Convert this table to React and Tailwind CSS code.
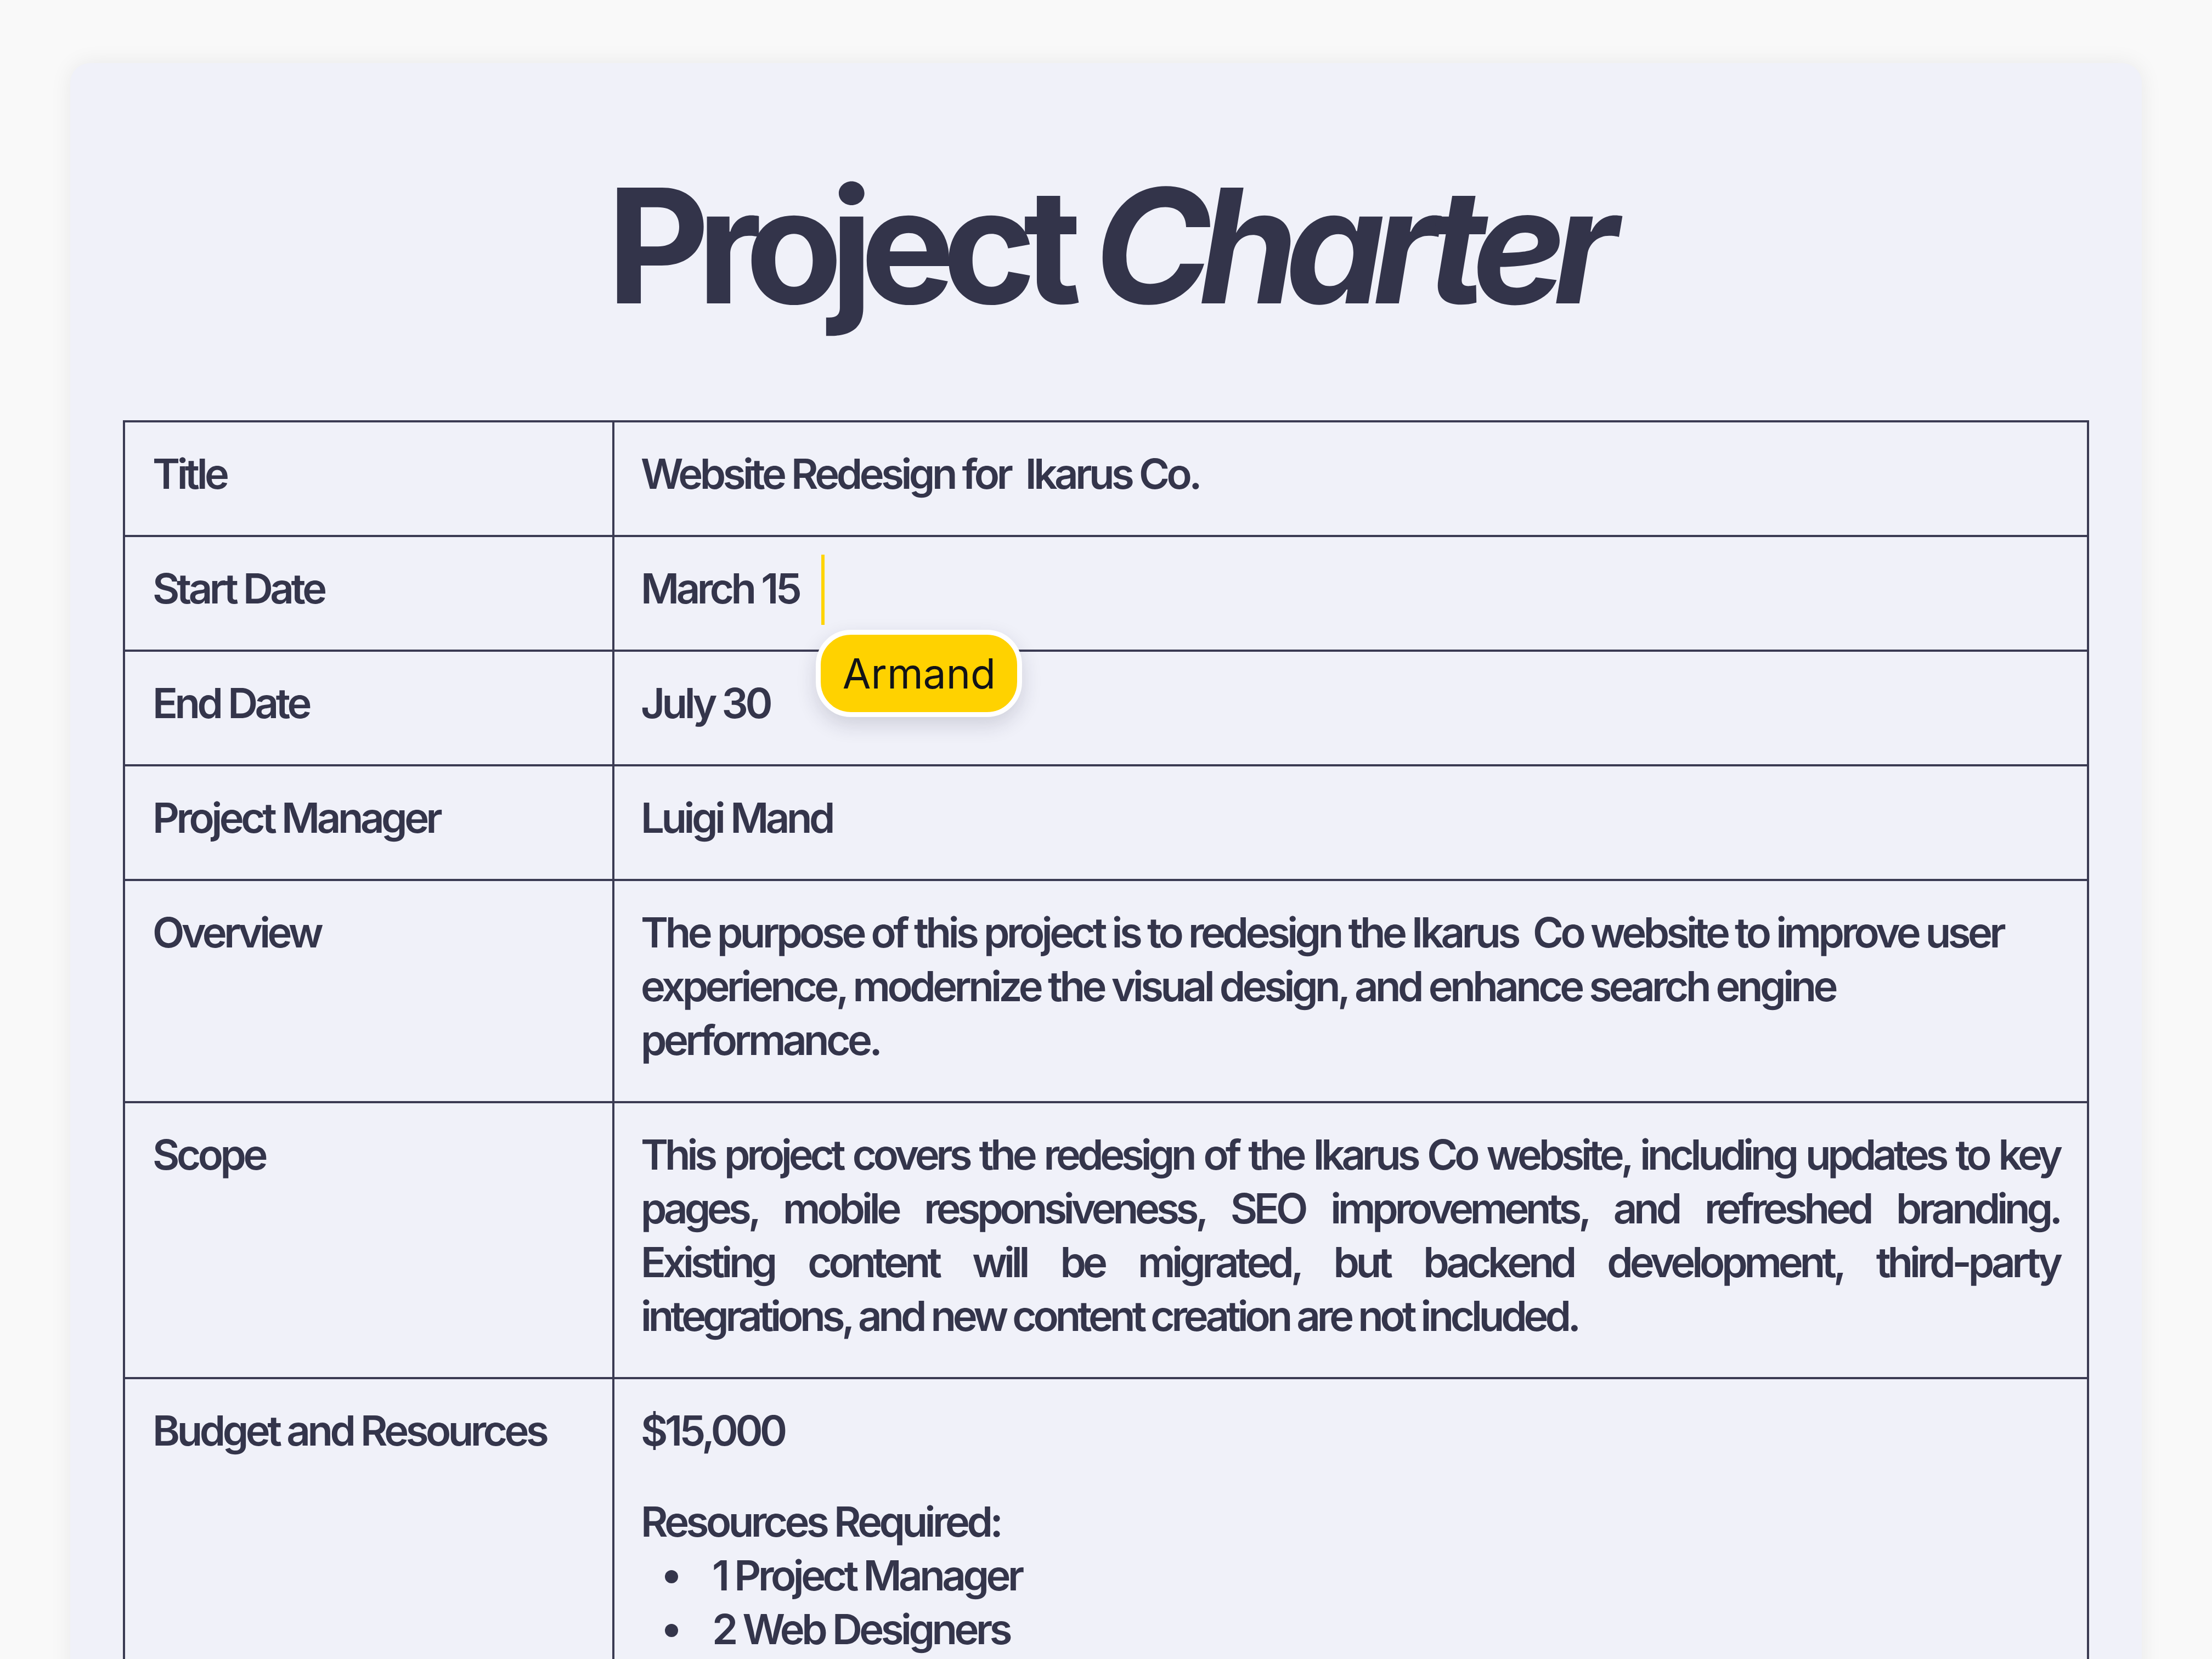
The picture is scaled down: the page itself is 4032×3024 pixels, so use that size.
import React from "react"

const font = { fontFamily: "Inter, 'Noto Sans', sans-serif" }

const rows = [
  { label: "Title", value: "Website Redesign for\u00a0 Ikarus Co." },
  { label: "Start Date", value: "cursor" },
  { label: "End Date", value: "July 30" },
  { label: "Project Manager", value: "Luigi Mand" },
  {
    label: "Overview",
    value:
      "The purpose of this project is to redesign the Ikarus\u00a0 Co website to improve user experience, modernize the visual design, and enhance search engine performance.",
  },
  {
    label: "Scope",
    justify: true,
    value:
      "This project covers the redesign of the Ikarus Co website, including updates to key pages, mobile responsiveness, SEO improvements, and refreshed branding. Existing content will be migrated, but backend development, third-party integrations, and new content creation are not included.",
  },
  { label: "Budget and Resources", value: "budget" },
]

function CursorValue() {
  return (
    <span className="relative inline-block">
      March 15
      {/* collaborator caret + name tag */}
      <span className="absolute left-[calc(100%+41px)] top-[-12px] h-[128px] w-[6px] bg-[#ffd400]" />
      <span
        className="absolute left-[calc(100%+31px)] top-[125px] z-10 flex h-[159px] w-[376px] items-center justify-center rounded-[64px] border-[9px] border-white bg-[#ffd200] text-[75px] font-normal tracking-normal text-[#111318] shadow-[0_14px_36px_rgba(30,30,60,0.16)]"
        style={font}
      >
        Armand
      </span>
    </span>
  )
}

function Budget() {
  return (
    <div>
      <p className="mb-[68px]">$15,000</p>
      <p>Resources Required:</p>
      <ul>
        {["1 Project Manager", "2 Web Designers"].map((t) => (
          <li key={t} className="flex items-center">
            <span className="ml-[44px] mr-[62px] mt-[6px] h-[24px] w-[24px] shrink-0 rounded-full bg-[#34354b]" />
            {t}
          </li>
        ))}
      </ul>
    </div>
  )
}

export default function App() {
  return (
    <div className="min-h-screen bg-[#f9f9f9] px-[128px] pt-[115px]" style={font}>
      <div className="rounded-t-[36px] bg-[#f0f1f9] px-[96px] pb-[200px] pt-[188px] shadow-[0_0_40px_rgba(0,0,0,0.07)]">
        <h1 className="text-center text-[290px] font-bold leading-none tracking-[-0.08em] text-[#33344a]">
          Project <span className="italic">Charter</span>
        </h1>

        <table className="mt-[173px] w-full border-collapse text-[76px] font-semibold leading-[98px] tracking-[-0.072em] text-[#34354b]">
          <tbody>
            {rows.map((r) => (
              <tr key={r.label}>
                <td className="w-[892px] border-[4px] border-[#3b3b53] px-[50px] pb-[63px] pt-[44px] align-top">
                  {r.label}
                </td>
                <td
                  className={
                    "border-[4px] border-[#3b3b53] pl-[48px] pr-[50px] pb-[63px] pt-[44px] align-top " +
                    (r.justify ? "text-justify tracking-[-0.08em]" : "text-left")
                  }
                >
                  {r.value === "cursor" ? (
                    <CursorValue />
                  ) : r.value === "budget" ? (
                    <Budget />
                  ) : (
                    r.value
                  )}
                </td>
              </tr>
            ))}
          </tbody>
        </table>
      </div>
    </div>
  )
}
